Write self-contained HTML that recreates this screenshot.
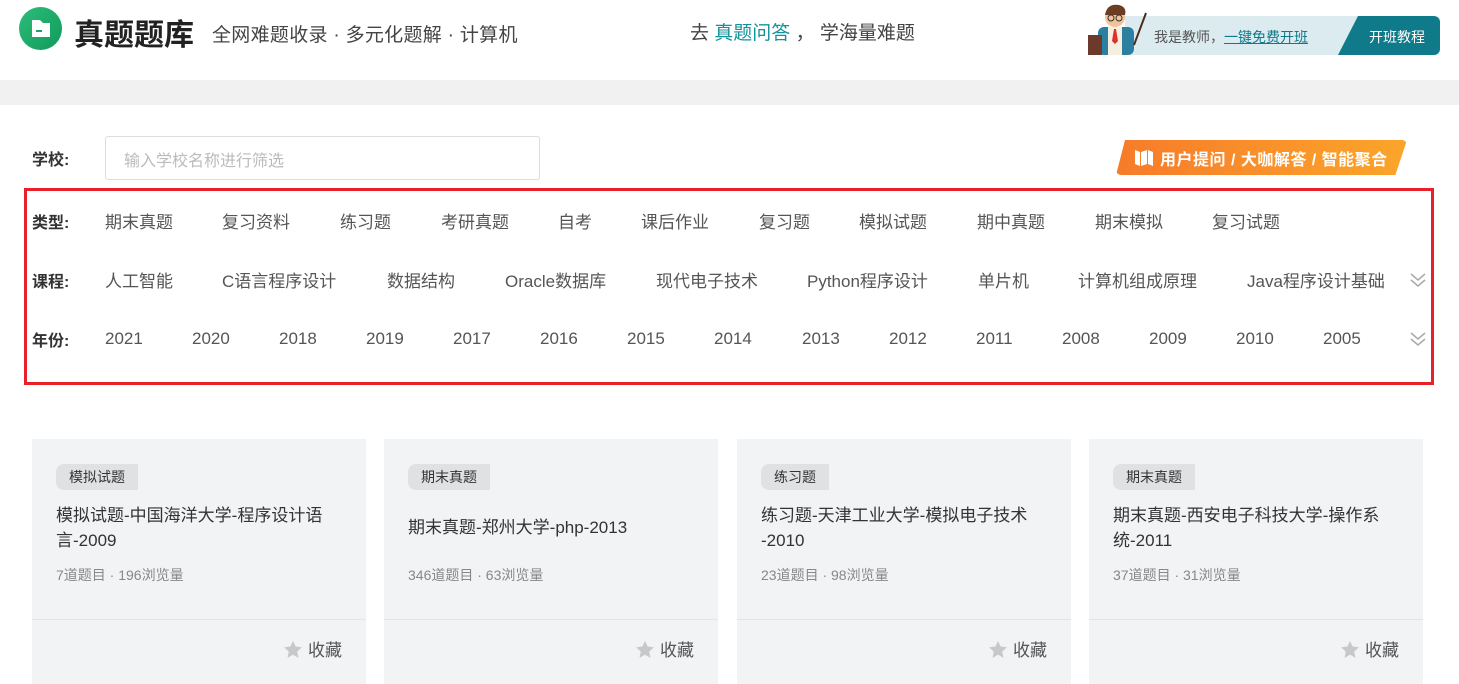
<!DOCTYPE html><html><head><meta charset="utf-8"><style>
*{margin:0;padding:0;box-sizing:border-box}
body{width:1459px;height:684px;overflow:hidden;background:#fff;font-family:"Liberation Sans","Noto Sans CJK SC",sans-serif;position:relative;color:#333}
.a{position:absolute;white-space:nowrap}
.hd{position:absolute;left:0;top:0;width:1459px;height:80px;background:#fff;box-shadow:0 1px 3px rgba(0,0,0,.08)}
.band{position:absolute;left:0;top:80px;width:1459px;height:25px;background:#f1f1f1}
.f{font-size:17px;color:#555}
.r1{top:208px}.r2{top:267px}.r3{top:329px}
.lb{font-size:16px;font-weight:bold;color:#333;left:32px}
.card{position:absolute;top:439px;width:334px;height:245px;background:#f2f3f5}
.card .tag{position:absolute;left:24px;top:25px;height:26px;padding:0 13px;line-height:26px;background:#e0e1e3;border-radius:8px 0 0 8px;font-size:14px;color:#333}
.card .t{position:absolute;left:24px;top:64px;width:300px;font-size:17px;line-height:25px;color:#333}
.card .m{position:absolute;left:24px;top:126px;font-size:14px;color:#888}
.card .d{position:absolute;left:0;top:180px;width:100%;border-top:1px solid #e3e4e6}
.card .s{position:absolute;right:24px;top:197px;font-size:17px;color:#555}
.card .s svg{vertical-align:-2px;margin-right:6px}
.chev{position:absolute;left:1410px}
</style></head><body>
<div class="hd"></div><div class="band"></div>
<svg class="a" style="left:19px;top:7px" width="43" height="43" viewBox="0 0 43 43"><defs><linearGradient id="g" x1="0" y1="0" x2="1" y2="1"><stop offset="0" stop-color="#2dbd7a"/><stop offset="1" stop-color="#109a5a"/></linearGradient></defs><circle cx="21.5" cy="21.5" r="21.5" fill="url(#g)"/><path d="M13 13h8l3 3h7v14h-18z" fill="#fff"/><rect x="17" y="23" width="6" height="2" fill="#1aa466"/></svg>
<div class="a" style="left:74px;top:10px;font-size:30px;font-weight:bold;color:#222">真题题库</div>
<div class="a" style="left:212px;top:20px;font-size:19px;color:#444;letter-spacing:0.3px">全网难题收录 · 多元化题解 · 计算机</div>
<div class="a" style="left:690px;top:18px;font-size:19px;color:#444">去 <span style="color:#12939c">真题问答</span> ， 学海量难题</div>
<div class="a" style="left:1125px;top:16px;width:235px;height:39px;background:#dcebf0"></div>
<div class="a" style="left:1338px;top:16px;width:102px;height:39px;background:#0f7a8a;border-radius:0 6px 6px 0;clip-path:polygon(20px 0,100% 0,100% 100%,0 100%)"></div>
<div class="a" style="left:1369px;top:27px;font-size:14px;color:#fff">开班教程</div>
<div class="a" style="left:1154px;top:27px;font-size:14px;color:#555">我是教师，<span style="color:#0f7a8a;text-decoration:underline">一键免费开班</span></div>
<svg class="a" style="left:1086px;top:3px" width="62" height="52" viewBox="0 0 62 52"><rect x="12" y="24" width="36" height="28" rx="6" fill="#2c7fa0"/><rect x="22" y="24" width="14" height="28" fill="#f5efe0"/><path d="M28 26l-2 12 3 3 3-3-2-12z" fill="#e0302a"/><circle cx="29" cy="14" r="10" fill="#f0c49a"/><path d="M19 12q2-12 14-10 8 2 6 10z" fill="#6b3e24"/><circle cx="25" cy="15" r="3" fill="none" stroke="#333"/><circle cx="33" cy="15" r="3" fill="none" stroke="#333"/><rect x="2" y="32" width="14" height="20" fill="#6b3a2a"/><path d="M48 42l12-32" stroke="#4a2a1a" stroke-width="2"/></svg>
<div class="a" style="left:105px;top:136px;width:435px;height:44px;border:1px solid #ddd;border-radius:3px;padding:10px 18px;font-size:16px;color:#bbb">输入学校名称进行筛选</div>
<div class="a lb" style="top:146px">学校:</div>
<div class="a" style="left:1116px;top:140px;width:291px;height:35px;background:linear-gradient(90deg,#f77b2a,#fba52a);clip-path:polygon(9px 0,100% 0,96% 100%,0 100%);border-radius:5px"></div>
<svg class="a" style="left:1134px;top:148px" width="20" height="18" viewBox="0 0 20 18"><path d="M1 2l5 2v14l-5-2zM7 4l6-2v14l-6 2zM14 2l5 2v14l-5-2z" fill="#fff"/></svg>
<div class="a" style="left:1160px;top:146px;font-size:16px;font-weight:bold;color:#fff;letter-spacing:0.5px">用户提问 / 大咖解答 / 智能聚合</div>
<div class="a" style="left:24px;top:188px;width:1410px;height:197px;border:3px solid #e8202a"></div>
<div class="a lb" style="top:209px">类型:</div>
<div class="a lb" style="top:268px">课程:</div>
<div class="a lb" style="top:327px">年份:</div>
<div class="a f r1" style="left:105px">期末真题</div><div class="a f r1" style="left:222px">复习资料</div><div class="a f r1" style="left:340px">练习题</div><div class="a f r1" style="left:441px">考研真题</div><div class="a f r1" style="left:558px">自考</div><div class="a f r1" style="left:641px">课后作业</div><div class="a f r1" style="left:759px">复习题</div><div class="a f r1" style="left:859px">模拟试题</div><div class="a f r1" style="left:977px">期中真题</div><div class="a f r1" style="left:1095px">期末模拟</div><div class="a f r1" style="left:1212px">复习试题</div>
<div class="a f r2" style="left:105px">人工智能</div><div class="a f r2" style="left:222px">C语言程序设计</div><div class="a f r2" style="left:387px">数据结构</div><div class="a f r2" style="left:505px">Oracle数据库</div><div class="a f r2" style="left:656px">现代电子技术</div><div class="a f r2" style="left:807px">Python程序设计</div><div class="a f r2" style="left:978px">单片机</div><div class="a f r2" style="left:1078px">计算机组成原理</div><div class="a f r2" style="left:1247px">Java程序设计基础</div>
<div class="a f r3" style="left:105px">2021</div><div class="a f r3" style="left:192px">2020</div><div class="a f r3" style="left:279px">2018</div><div class="a f r3" style="left:366px">2019</div><div class="a f r3" style="left:453px">2017</div><div class="a f r3" style="left:540px">2016</div><div class="a f r3" style="left:627px">2015</div><div class="a f r3" style="left:714px">2014</div><div class="a f r3" style="left:802px">2013</div><div class="a f r3" style="left:889px">2012</div><div class="a f r3" style="left:976px">2011</div><div class="a f r3" style="left:1062px">2008</div><div class="a f r3" style="left:1149px">2009</div><div class="a f r3" style="left:1236px">2010</div><div class="a f r3" style="left:1323px">2005</div>
<svg class="chev" style="top:272px" width="16" height="16" viewBox="0 0 16 16"><path d="M1 2l7 6 7-6M1 8l7 6 7-6" fill="none" stroke="#aaa" stroke-width="1.5"/></svg>
<svg class="chev" style="top:331px" width="16" height="16" viewBox="0 0 16 16"><path d="M1 2l7 6 7-6M1 8l7 6 7-6" fill="none" stroke="#aaa" stroke-width="1.5"/></svg>
<div class="card" style="left:32px"><div class="tag">模拟试题</div><div class="t">模拟试题-中国海洋大学-程序设计语言-2009</div><div class="m">7道题目 · 196浏览量</div><div class="d"></div><div class="s"><svg width="18" height="17" viewBox="0 0 24 23"><path d="M12 0l3.5 7.5 8.5 1-6.3 5.8 1.7 8.5L12 18.5 4.6 22.8l1.7-8.5L0 8.5l8.5-1z" fill="#c8c8c8"/></svg>收藏</div></div>
<div class="card" style="left:384px"><div class="tag">期末真题</div><div class="t" style="top:76px">期末真题-郑州大学-php-2013</div><div class="m">346道题目 · 63浏览量</div><div class="d"></div><div class="s"><svg width="18" height="17" viewBox="0 0 24 23"><path d="M12 0l3.5 7.5 8.5 1-6.3 5.8 1.7 8.5L12 18.5 4.6 22.8l1.7-8.5L0 8.5l8.5-1z" fill="#c8c8c8"/></svg>收藏</div></div>
<div class="card" style="left:737px"><div class="tag">练习题</div><div class="t">练习题-天津工业大学-模拟电子技术<br>-2010</div><div class="m">23道题目 · 98浏览量</div><div class="d"></div><div class="s"><svg width="18" height="17" viewBox="0 0 24 23"><path d="M12 0l3.5 7.5 8.5 1-6.3 5.8 1.7 8.5L12 18.5 4.6 22.8l1.7-8.5L0 8.5l8.5-1z" fill="#c8c8c8"/></svg>收藏</div></div>
<div class="card" style="left:1089px"><div class="tag">期末真题</div><div class="t">期末真题-西安电子科技大学-操作系统-2011</div><div class="m">37道题目 · 31浏览量</div><div class="d"></div><div class="s"><svg width="18" height="17" viewBox="0 0 24 23"><path d="M12 0l3.5 7.5 8.5 1-6.3 5.8 1.7 8.5L12 18.5 4.6 22.8l1.7-8.5L0 8.5l8.5-1z" fill="#c8c8c8"/></svg>收藏</div></div>
</body></html>
